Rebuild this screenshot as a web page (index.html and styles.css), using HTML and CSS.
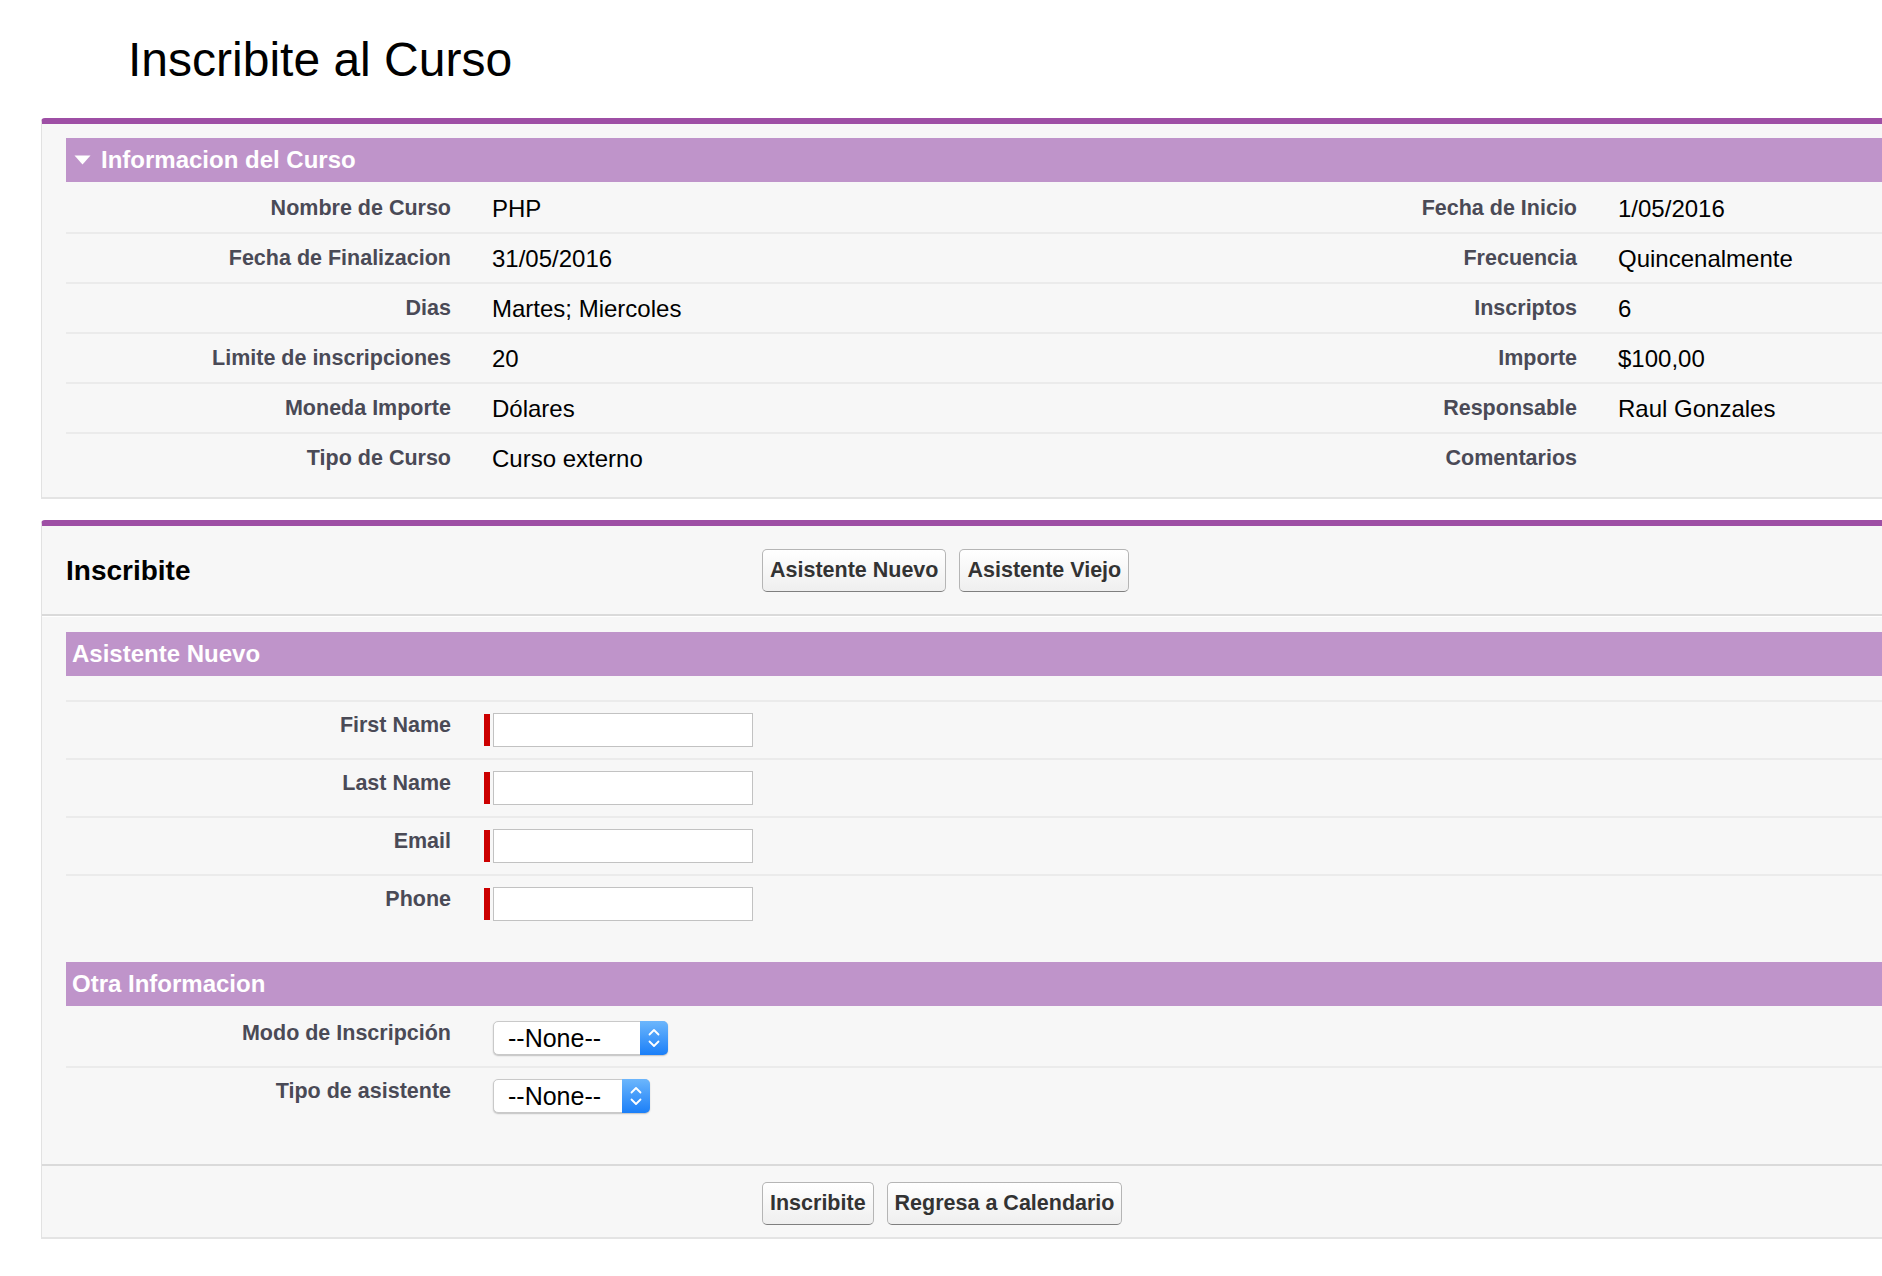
FILE: index.html
```html
<!DOCTYPE html>
<html lang="es">
<head>
<meta charset="utf-8">
<title>Inscribite al Curso</title>
<link rel="stylesheet" href="styles.css">
</head>
<body>
<h1 class="page-title">Inscribite al Curso</h1>

<section class="card">
  <div class="detail-body">
    <div class="sub-header">
      <svg class="twisty" width="17" height="10" viewBox="0 0 17 10"><polygon points="0.5,0.5 16.5,0.5 8.5,9.5" fill="#fff"/></svg>
      <span>Informacion del Curso</span>
    </div>
    <div class="detail-list">
      <div class="detail-row">
        <div class="lbl">Nombre de Curso</div><div class="val">PHP</div>
        <div class="lbl">Fecha de Inicio</div><div class="val">1/05/2016</div>
      </div>
      <div class="detail-row">
        <div class="lbl">Fecha de Finalizacion</div><div class="val">31/05/2016</div>
        <div class="lbl">Frecuencia</div><div class="val">Quincenalmente</div>
      </div>
      <div class="detail-row">
        <div class="lbl">Dias</div><div class="val">Martes; Miercoles</div>
        <div class="lbl">Inscriptos</div><div class="val">6</div>
      </div>
      <div class="detail-row">
        <div class="lbl">Limite de inscripciones</div><div class="val">20</div>
        <div class="lbl">Importe</div><div class="val">$100,00</div>
      </div>
      <div class="detail-row">
        <div class="lbl">Moneda Importe</div><div class="val">Dólares</div>
        <div class="lbl">Responsable</div><div class="val">Raul Gonzales</div>
      </div>
      <div class="detail-row">
        <div class="lbl">Tipo de Curso</div><div class="val">Curso externo</div>
        <div class="lbl">Comentarios</div><div class="val"></div>
      </div>
    </div>
  </div>
</section>

<section class="card card-form">
  <div class="block-header">
    <h2 class="block-title">Inscribite</h2>
    <div class="btn-group">
      <button class="btn" type="button">Asistente Nuevo</button>
      <button class="btn" type="button">Asistente Viejo</button>
    </div>
  </div>

  <div class="form-body">
    <div class="sub-header plain">Asistente Nuevo</div>
    <div class="form-list ruled">
      <div class="form-row">
        <label class="lbl">First Name</label>
        <div class="field"><span class="req"></span><input class="text-input" type="text"></div>
      </div>
      <div class="form-row">
        <label class="lbl">Last Name</label>
        <div class="field"><span class="req"></span><input class="text-input" type="text"></div>
      </div>
      <div class="form-row">
        <label class="lbl">Email</label>
        <div class="field"><span class="req"></span><input class="text-input" type="text"></div>
      </div>
      <div class="form-row">
        <label class="lbl">Phone</label>
        <div class="field"><span class="req"></span><input class="text-input" type="text"></div>
      </div>
    </div>

    <div class="sub-header plain second">Otra Informacion</div>
    <div class="form-list other">
      <div class="form-row">
        <label class="lbl">Modo de Inscripción</label>
        <div class="field pick">
          <div class="select-wrap wide">
            <select class="select"><option>--None--</option></select>
            <span class="select-arrow"><svg width="28" height="32" viewBox="0 0 28 32"><path d="M9.5 12.5 L14 8 L18.5 12.5 M9.5 19.5 L14 24 L18.5 19.5" fill="none" stroke="#fff" stroke-width="1.8" stroke-linecap="round" stroke-linejoin="round"/></svg></span>
          </div>
        </div>
      </div>
      <div class="form-row">
        <label class="lbl">Tipo de asistente</label>
        <div class="field pick">
          <div class="select-wrap">
            <select class="select"><option>--None--</option></select>
            <span class="select-arrow"><svg width="28" height="32" viewBox="0 0 28 32"><path d="M9.5 12.5 L14 8 L18.5 12.5 M9.5 19.5 L14 24 L18.5 19.5" fill="none" stroke="#fff" stroke-width="1.8" stroke-linecap="round" stroke-linejoin="round"/></svg></span>
          </div>
        </div>
      </div>
    </div>
  </div>

  <div class="block-footer">
    <div class="footer-spacer"></div>
    <div class="btn-group">
      <button class="btn" type="button">Inscribite</button>
      <button class="btn" type="button">Regresa a Calendario</button>
    </div>
  </div>
</section>
</body>
</html>
```

FILE: styles.css
```css
html {
  overflow: hidden;
}

body {
  margin: 0;
  background: #fff;
  font-family: "Liberation Sans", Arial, Helvetica, sans-serif;
  color: #000;
}

.page-title {
  margin: 0;
  padding: 32px 0 0 128px;
  font-size: 48px;
  line-height: 55px;
  font-weight: normal;
}

.card {
  width: 2100px;
  margin: 31px 0 0 41px;
  background: #f7f7f7;
  border: 1px solid #e2e2e2;
  border-top: 6px solid #9e4fa5;
  border-bottom: 2px solid #e4e4e4;
  border-radius: 4px 4px 0 0;
}

.card-form {
  margin-top: 21px;
}

/* section headers */
.sub-header {
  display: flex;
  align-items: center;
  height: 44px;
  padding-left: 8px;
  background: #bf94ca;
  color: #fff;
  font-size: 24px;
  line-height: 44px;
  font-weight: bold;
}

.sub-header .twisty {
  margin-right: 10px;
  flex: none;
}

.sub-header.plain {
  padding-left: 6px;
}

.sub-header.second {
  margin-top: 30px;
}

/* detail card */
.detail-body {
  padding: 14px 0 15px 24px;
}

.detail-list {
  padding-top: 2px;
}

.detail-row {
  display: grid;
  grid-template-columns: 385px 659px 385px 1fr;
  column-gap: 41px;
  min-height: 48px;
  border-bottom: 2px solid #ebebeb;
}

.detail-row:last-child {
  border-bottom: 0;
}

.lbl {
  display: block;
  text-align: right;
  color: #4a4a56;
  font-size: 21.5px;
  line-height: 26px;
  font-weight: bold;
  padding-top: 10px;
}

.detail-row .lbl {
  padding-top: 11px;
}

.val {
  font-size: 24px;
  line-height: 28px;
  padding-top: 11px;
}

/* form card */
.block-header {
  display: flex;
  align-items: center;
  padding: 23px 0 22px 24px;
  border-bottom: 2px solid #dadada;
  box-shadow: 0 1px 0 #fff;
}

.block-title {
  width: 696px;
  margin: 0;
  font-size: 28px;
  font-weight: bold;
  line-height: 34px;
}

.btn-group {
  display: flex;
  gap: 13px;
}

.btn {
  height: 43px;
  padding: 0 7px;
  font-family: inherit;
  font-size: 21.5px;
  font-weight: bold;
  line-height: 41px;
  color: #333;
  background: linear-gradient(#ffffff, #efefef);
  border: 1px solid #b5b5b5;
  border-bottom-color: #7f7f7f;
  border-radius: 5px;
}

.form-body {
  padding: 16px 0 40px 24px;
}

.form-list.ruled {
  margin-top: 24px;
}

.form-row {
  display: grid;
  grid-template-columns: 385px 1fr;
  column-gap: 33px;
  height: 56px;
  border-top: 2px solid #ebebeb;
}

.form-list.other .form-row:first-child {
  border-top: 0;
  height: 60px;
  padding-top: 4px;
  box-sizing: border-box;
}

.field {
  display: flex;
  align-items: center;
  align-self: start;
  margin-top: 11px;
}

.field.pick {
  padding-left: 9px;
}

.req {
  width: 6px;
  height: 32px;
  margin-right: 3px;
  background: #cc0000;
}

.text-input {
  box-sizing: border-box;
  width: 260px;
  height: 34px;
  margin: 0;
  border: 1px solid #c2c2c2;
  border-radius: 0;
  background: #fff;
  font-family: inherit;
  font-size: 20px;
}

.select-wrap {
  position: relative;
  width: 157px;
  height: 34px;
}

.select-wrap.wide {
  width: 175px;
}

.select {
  -webkit-appearance: none;
  appearance: none;
  box-sizing: border-box;
  width: 100%;
  height: 34px;
  margin: 0;
  padding: 0 0 0 14px;
  border: 1px solid #c9c9c9;
  border-radius: 5px;
  background: #fff;
  box-shadow: 0 1px 1.5px rgba(0, 0, 0, 0.22);
  font-family: inherit;
  font-size: 25px;
  line-height: 32px;
  color: #000;
}

.select-arrow {
  position: absolute;
  top: 0;
  right: 0;
  width: 28px;
  height: 34px;
  display: flex;
  align-items: center;
  justify-content: center;
  border-radius: 0 5px 5px 0;
  background: linear-gradient(#6cb6fc, #1b7ff8);
}

.block-footer {
  display: flex;
  padding: 16px 0 12px 24px;
  border-top: 2px solid #dadada;
}

.footer-spacer {
  width: 696px;
  flex: none;
}
```
